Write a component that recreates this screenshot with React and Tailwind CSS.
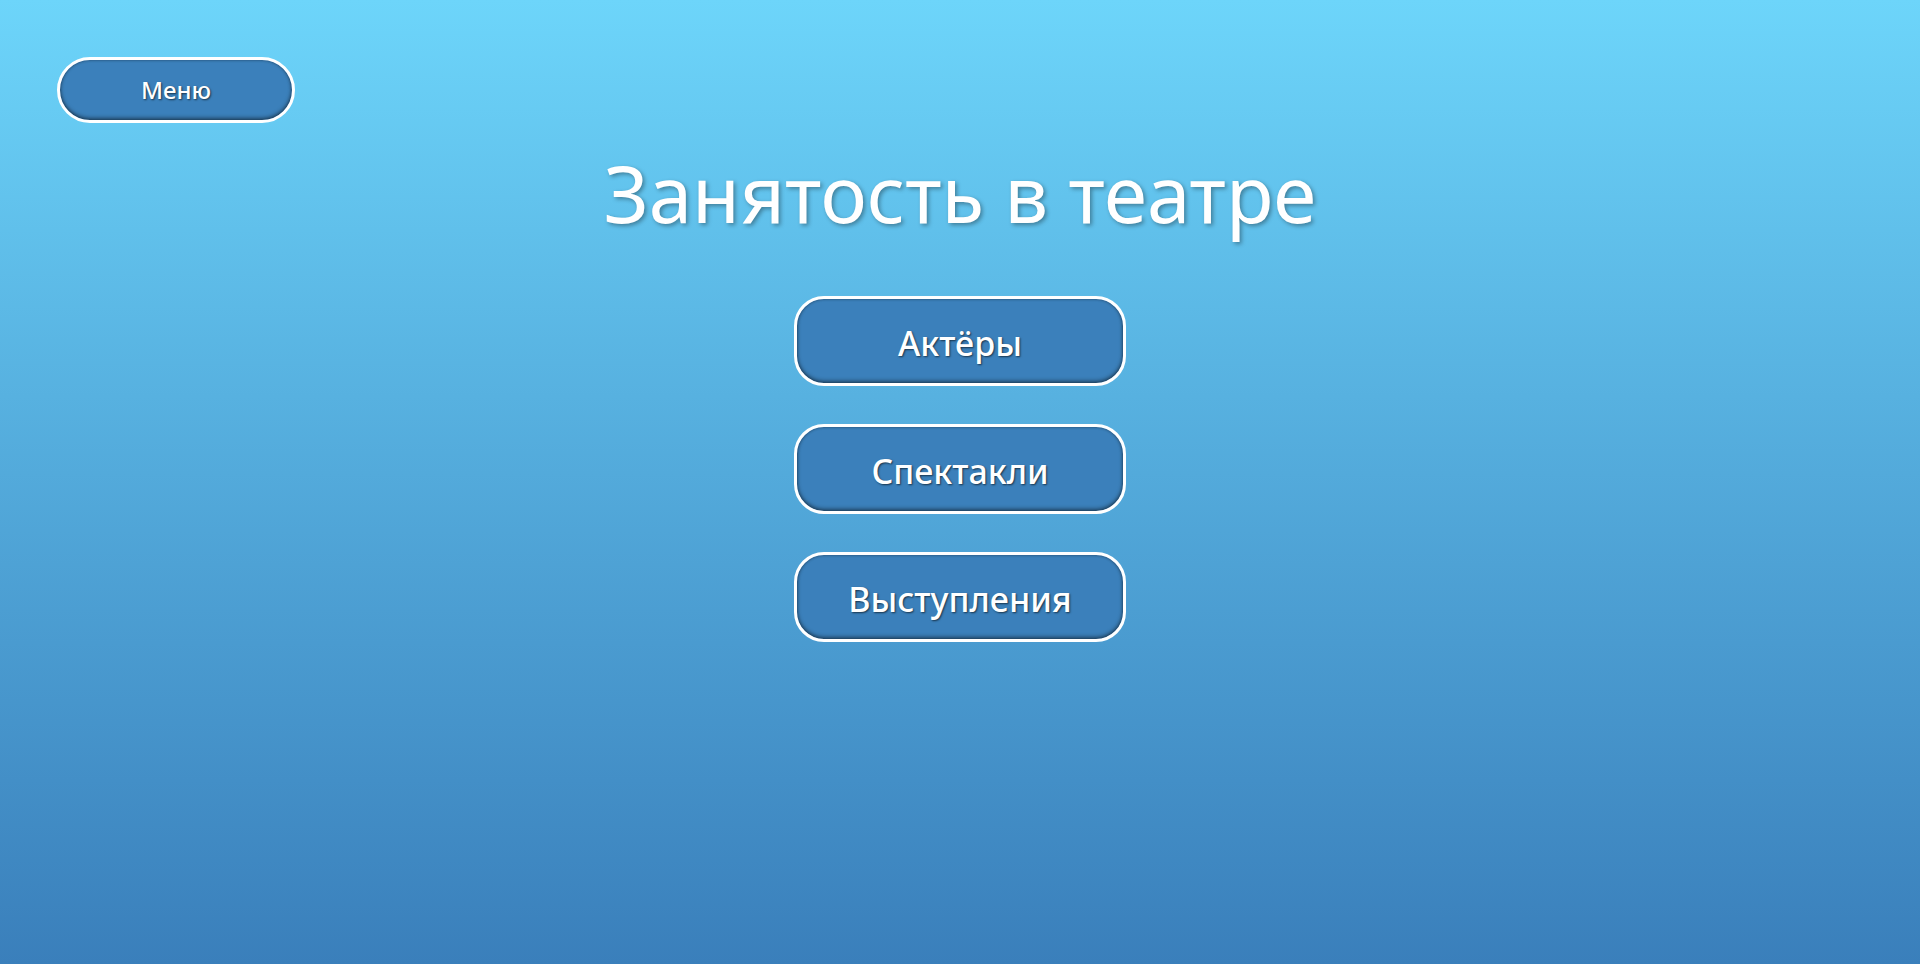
const font = { fontFamily: '"Comic Sans MS", "Noto Sans", sans-serif' };

function NavButton({ children }) {
  return (
    <button
      className="flex h-[90px] w-[332px] items-center justify-center rounded-[30px] border-[3px] border-white bg-[#3b80bb] pt-[4px] text-[34px] font-medium text-white shadow-[inset_0_-2px_4px_rgba(0,0,0,0.45),inset_0_0_3px_rgba(0,0,0,0.35)] [text-shadow:1px_1px_2px_rgba(0,0,0,0.6)]"
    >
      {children}
    </button>
  );
}

export default function App() {
  return (
    <div
      className="min-h-[964px] bg-gradient-to-b from-[#6dd5fa] to-[#3a7fbb] px-[57px] pt-[57px]"
      style={font}
    >
      <button className="flex h-[66px] w-[238px] items-center justify-center rounded-full border-[3px] border-white bg-[#3b80bb] text-[24px] font-medium text-white shadow-[inset_0_-2px_4px_rgba(0,0,0,0.45),inset_0_0_3px_rgba(0,0,0,0.35)] [text-shadow:1px_1px_2px_rgba(0,0,0,0.6)]">
        Меню
      </button>

      <h1 className="mt-[20px] text-center text-[78px] leading-[100px] text-white [text-shadow:2px_2px_4px_rgba(0,0,0,0.35)]">
        Занятость в театре
      </h1>

      <div className="mt-[53px] flex flex-col items-center gap-[38px]">
        <NavButton>Актёры</NavButton>
        <NavButton>Спектакли</NavButton>
        <NavButton>Выступления</NavButton>
      </div>
    </div>
  );
}
